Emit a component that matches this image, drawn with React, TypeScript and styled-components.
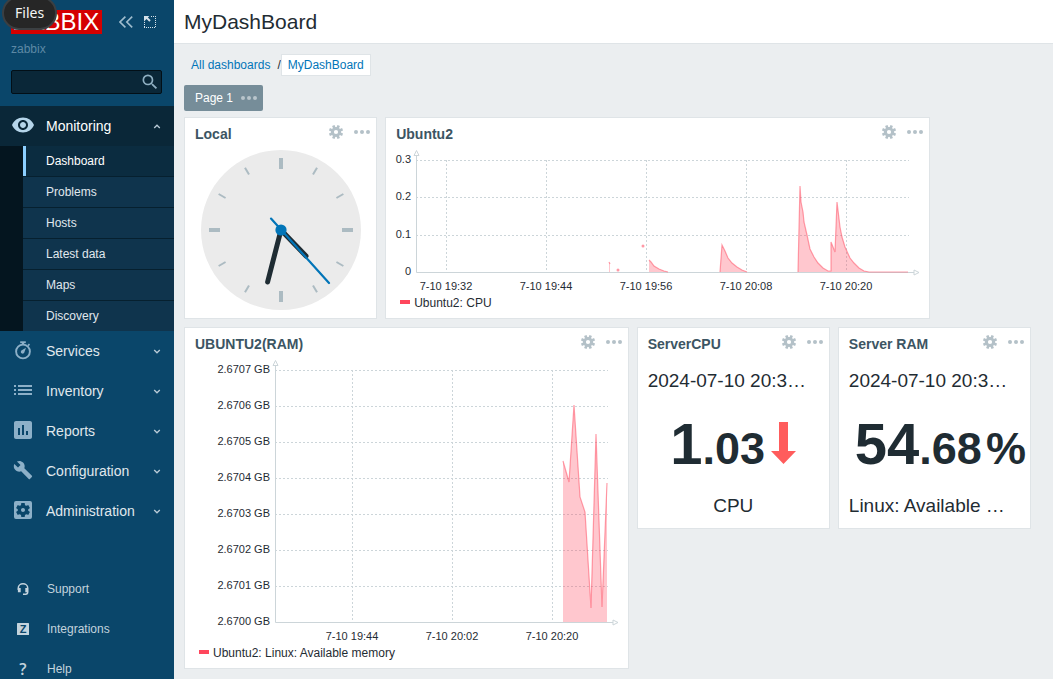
import React, { useLayoutEffect, useRef, useState } from "react";
import styled, { createGlobalStyle } from "styled-components";
import {
  MdAssessment,
  MdBuild,
  MdSearch,
  MdSettingsApplications,
  MdVisibility,
} from "react-icons/md";

const GlobalStyle = createGlobalStyle`
  *, *::before, *::after { box-sizing: border-box; }
  body {
    margin: 0;
    background: #ebeef0;
    color: #1f2c33;
    font-family: "Liberation Sans", Arial, sans-serif;
    font-size: 12px;
    line-height: 16px;
  }
  button { font: inherit; color: inherit; border: 0; padding: 0; background: none; cursor: pointer; }
  a { text-decoration: none; color: inherit; }
  ul { list-style: none; margin: 0; padding: 0; }
  svg { display: block; }
`;

const Page = styled.div`
  display: flex;
  min-height: 100vh;
`;

/* ---------- sidebar ---------- */

const Sidebar = styled.aside`
  position: sticky;
  top: 0;
  flex: 0 0 174px;
  height: 100vh;
  overflow: hidden;
  background: #0a466a;
  color: #e6edf1;
`;

const SidebarTop = styled.div`
  display: flex;
  align-items: center;
  height: 24px;
  margin: 10px 0 0 11px;
`;

const Logo = styled.a`
  display: flex;
  flex: none;
  align-items: center;
  justify-content: center;
  width: 91px;
  height: 24px;
  margin-right: 17px;
  background: #d40000;
  color: #fff;
  font-size: 24px;
  line-height: 24px;
`;

const TopButton = styled.button`
  display: flex;
  margin-right: 11px;
  color: #9fbccd;
`;

const ServerName = styled.div`
  margin: 7px 11px 13px;
  color: #5d89a5;
`;

const SearchForm = styled.form`
  display: flex;
  align-items: center;
  height: 24px;
  margin: 0 12px 12px 11px;
  padding-right: 1px;
  border: 1px solid #020f17;
  border-radius: 2px;
  background: #0a2738;
`;

const SearchInput = styled.input`
  flex: 1;
  min-width: 0;
  height: 22px;
  padding: 0 6px;
  border: 0;
  outline: 0;
  background: transparent;
  color: #f2f2f2;
  font: inherit;
`;

const SearchButton = styled.button`
  display: flex;
  color: #8fafc2;
`;

const MenuLink = styled.a<{ $open?: boolean }>`
  display: flex;
  align-items: center;
  height: 40px;
  padding: 0 13px 0 11px;
  background: ${(p) => (p.$open ? "#0a2738" : "transparent")};
  color: ${(p) => (p.$open ? "#ffffff" : "#e0e8ed")};
  font-size: 14px;
`;

const MenuIcon = styled.span<{ $open?: boolean }>`
  display: flex;
  align-items: center;
  justify-content: center;
  width: 24px;
  height: 24px;
  margin: 0 11px 2px 0;
  color: ${(p) => (p.$open ? "#b5d5ea" : "#8db0c8")};
`;

const MenuLabel = styled.span`
  flex: 1;
`;

const SubMenu = styled.ul`
  padding-left: 23px;
  background: #04151f;
`;

const SubItem = styled.li`
  & + & {
    border-top: 1px solid #06202f;
  }
`;

const SubLink = styled.a<{ $active?: boolean }>`
  display: flex;
  align-items: center;
  height: 30px;
  padding-left: 20px;
  border-left: 3px solid ${(p) => (p.$active ? "#8ccfff" : "#0f344d")};
  background: ${(p) => (p.$active ? "#0b2c40" : "#0f344d")};
  color: ${(p) => (p.$active ? "#ffffff" : "#e0e8ed")};
`;

const FooterMenu = styled.ul`
  margin-top: 38px;
`;

const FooterLink = styled.a`
  display: flex;
  align-items: center;
  height: 40px;
  padding-left: 15px;
  color: #c3d3dd;
`;

const FooterIcon = styled.span`
  display: flex;
  align-items: center;
  justify-content: center;
  width: 16px;
  height: 16px;
  margin-right: 16px;
  padding-bottom: 1px;
  font-family: "Open Sans", sans-serif;
  font-size: 16px;
  font-weight: 600;
`;

const DockTooltip = styled.div`
  position: fixed;
  top: -4px;
  left: 2px;
  z-index: 10;
  padding: 6px 11px 7px;
  border: 2px solid #3b3f42;
  border-radius: 17px;
  background: #262626;
  color: #f5f5f5;
  font-family: "Noto Sans", sans-serif;
  font-size: 14px;
  line-height: 17px;
`;

/* ---------- main area ---------- */

const Main = styled.main`
  flex: 1;
  min-width: 0;
`;

const PageHeader = styled.header`
  height: 44px;
  padding: 10px;
  border-bottom: 1px solid #dfe4e7;
  background: #fff;
`;

const PageTitle = styled.h1`
  margin: 0;
  font-size: 21px;
  line-height: 24px;
  font-weight: 400;
`;

const Breadcrumbs = styled.nav`
  display: flex;
  align-items: center;
  margin: 10px 17px 9px;
`;

const Crumb = styled.a<{ $current?: boolean }>`
  height: 22px;
  padding: ${(p) => (p.$current ? "2px 6px" : "3px 0")};
  border: ${(p) => (p.$current ? "1px solid #dfe4e7" : "0")};
  background: ${(p) => (p.$current ? "#fff" : "transparent")};
  color: #0275b8;
`;

const CrumbDivider = styled.span`
  margin-left: 7px;
`;

const PageTab = styled.button`
  display: flex;
  align-items: center;
  gap: 8px;
  height: 26px;
  margin: 0 10px 6px;
  padding: 0 6px 0 11px;
  border-radius: 2px;
  background: #768d99;
  color: #fff;
`;

const TabDots = styled.span`
  color: #b9c5cc;
`;

const Board = styled.div`
  display: grid;
  grid-template-columns: repeat(17, minmax(0, 1fr));
  gap: 8px;
  align-items: start;
  margin: 0 22px 10px 10px;
`;

const Widget = styled.section<{ $span: number; $tall?: boolean }>`
  grid-column: span ${(p) => p.$span};
  min-height: ${(p) => (p.$tall ? 342 : 202)}px;
  border: 1px solid #dfe4e7;
  background: #fff;
`;

const WidgetHeader = styled.div`
  display: flex;
  align-items: flex-start;
  height: 30px;
  padding: 7px 6px 0 10px;
`;

const WidgetTitle = styled.h2`
  flex: 1;
  margin: 0;
  padding-top: 1px;
  color: #3c5563;
  font-size: 14px;
  line-height: 16px;
  font-weight: 700;
`;

const WidgetButton = styled.button`
  display: flex;
  margin-left: 11px;
  color: #b4c1c8;
`;

const ClockBody = styled.div`
  display: flex;
  justify-content: center;
  padding-top: 2px;
`;

const ChartBody = styled.div`
  overflow: hidden;
`;

const Legend = styled.div`
  display: flex;
  align-items: center;
  gap: 4px;
  padding-left: 14px;
`;

const LegendSwatch = styled.span`
  width: 10px;
  height: 4px;
  margin-bottom: 2px;
  background: #ff465c;
`;

const ValueBody = styled.div`
  display: flex;
  flex-direction: column;
  padding: 11px 10px 0;
`;

const ValueText = styled.div<{ $left?: boolean }>`
  overflow: hidden;
  font-size: 19px;
  line-height: 24px;
  text-align: ${(p) => (p.$left ? "left" : "center")};
  white-space: nowrap;
`;

const ValueRow = styled.div<{ $wide?: boolean }>`
  display: flex;
  align-items: baseline;
  justify-content: ${(p) => (p.$wide ? "flex-start" : "center")};
  height: 64px;
  margin: 19px 0 18px;
  padding-left: ${(p) => (p.$wide ? "6px" : "0")};
  font-weight: 700;
  line-height: 64px;
  white-space: nowrap;
`;

const ValueWhole = styled.span`
  font-size: 58px;
`;

const ValueDecimals = styled.span`
  font-size: 45px;
`;

const ValueUnits = styled.span`
  margin-left: 4px;
  font-size: 45px;
`;

const Trend = styled.span`
  margin-left: 6px;
`;

/* ---------- icons ---------- */

const GearIcon = () => (
  <svg width="14" height="14" viewBox="-7 -7 14 14" aria-hidden="true">
    <circle r="3.6" fill="none" stroke="currentColor" strokeWidth="3" />
    {[0, 1, 2, 3, 4, 5, 6, 7].map((i) => (
      <rect
        key={i}
        x="-1.3"
        y="-7.1"
        width="2.6"
        height="3"
        fill="currentColor"
        transform={`rotate(${22.5 + i * 45})`}
      />
    ))}
  </svg>
);

const DotsIcon = () => (
  <svg width="16" height="14" viewBox="0 0 16 14" fill="currentColor" aria-hidden="true">
    <circle cx="2" cy="7" r="2" />
    <circle cx="8" cy="7" r="2" />
    <circle cx="14" cy="7" r="2" />
  </svg>
);

const CollapseIcon = () => (
  <svg width="14" height="12" viewBox="0 0 14 12" fill="none" stroke="currentColor" strokeWidth="1.6" aria-hidden="true">
    <path d="M6.4.6 1 6l5.4 5.4M13.2.6 7.8 6l5.4 5.4" />
  </svg>
);

const CompactIcon = () => (
  <svg width="12" height="12" viewBox="0 0 12 12" fill="none" stroke="currentColor" aria-hidden="true">
    <path d="M7 .5h5M11.5 2v9M.5 6v5M0 11.5h12" strokeDasharray="1 1" stroke="#d5e2ea" />
    <path d="M0 0h5.4L3.9 1.5l2.8 2.8-1.4 1.4-2.8-2.8L0 5.4z" fill="#d5e2ea" stroke="none" />
  </svg>
);

const TimerIcon = () => (
  <svg width="24" height="24" viewBox="0 0 24 24" fill="none" stroke="currentColor" aria-hidden="true">
    <circle cx="12" cy="13.5" r="6.9" strokeWidth="1.9" />
    <path d="M9.2 4.2h5.6" strokeWidth="1.8" />
    <path d="M12 4v3" strokeWidth="2.4" />
    <path d="M17 7.6l1.5-1.5" strokeWidth="1.6" />
    <path d="M15 9.8l-1.6 4.4a1.8 1.8 0 1 1-2.6-1.9z" fill="currentColor" stroke="none" />
  </svg>
);

const ListIcon = () => (
  <svg width="18" height="10" viewBox="0 0 18 10" fill="currentColor" aria-hidden="true">
    <path d="M0 0h2v2H0zM4 0h14v2H4zM0 4h2v2H0zM4 4h14v2H4zM0 8h2v2H0zM4 8h14v2H4z" />
  </svg>
);

const HeadsetIcon = () => (
  <svg width="12" height="12" viewBox="0 0 12 12" fill="none" stroke="currentColor" aria-hidden="true">
    <path d="M1.3 7V5a4.7 4.2 0 0 1 9.4 0v4q0 2.2-2 2.2H6" strokeWidth="1.5" />
    <path d="M2.3 5v4.2M9.7 5v4.2" strokeWidth="2.8" />
  </svg>
);

const IntegrationsIcon = () => (
  <svg width="12" height="12" viewBox="0 0 12 12" aria-hidden="true">
    <rect width="12" height="12" rx="0.5" fill="currentColor" />
    <text
      x="6"
      y="10"
      textAnchor="middle"
      fontFamily="Liberation Sans, sans-serif"
      fontSize="11"
      fontWeight="700"
      fill="#0a466a"
    >
      Z
    </text>
  </svg>
);

const Chevron = ({ up }: { up?: boolean }) => (
  <svg width="8" height="6" viewBox="0 0 8 6" fill="none" stroke="#b9cbd7" strokeWidth="1.3" aria-hidden="true">
    <path d={up ? "M1.2 5 4 2.2 6.8 5" : "M1.2 2 4 4.8 6.8 2"} />
  </svg>
);

/* ---------- clock ---------- */

const Clock = () => (
  <svg width="160" height="160" viewBox="-80 -80 160 160" role="img" aria-label="Local time">
    <circle r="80" fill="#ebebeb" />
    {Array.from({ length: 12 }, (_, i) => {
      const major = i % 3 === 0;
      return (
        <rect
          key={i}
          x={major ? -2 : -1}
          y={-72}
          width={major ? 4 : 2}
          height={major ? 11 : 8}
          fill="#acbbc2"
          transform={`rotate(${i * 30})`}
        />
      );
    })}
    <g strokeLinecap="round">
      <path d="M0 0 25 26" stroke="#1f2c33" strokeWidth="5" />
      <path d="M0 0-13.4 52" stroke="#1f2c33" strokeWidth="5" />
      <path d="M-10 -11.4 48 53" stroke="#0275b8" strokeWidth="2.2" />
    </g>
    <circle r="5.6" fill="#0275b8" />
  </svg>
);

/* ---------- charts ---------- */

type Point = [number, number];

interface ChartProps {
  name: string;
  axisX: number;
  marginRight: number;
  // horizontal extent that the point and tick positions are given in
  domain: number;
  yTicks: { at: number; label: string }[];
  xTicks: { at: number; label: string }[];
  areas: Point[][];
  dots?: Point[];
}

const PLOT_TOP = 12;

const Chart = ({ name, axisX, marginRight, domain, yTicks, xTicks, areas, dots = [] }: ChartProps) => {
  const ref = useRef<HTMLDivElement>(null);
  const [width, setWidth] = useState(domain + axisX + marginRight);

  useLayoutEffect(() => {
    const box = ref.current;
    if (!box) return;
    const measure = () => setWidth(Math.round(box.clientWidth));
    measure();
    const observer = new ResizeObserver(measure);
    observer.observe(box);
    return () => observer.disconnect();
  }, []);

  const bottom = yTicks[yTicks.length - 1].at;
  const right = width - marginRight;
  const scale = (right - axisX) / domain;
  const px = (x: number) => axisX + x * scale;
  const grid = (x: number) => Math.round(px(x)) + 0.5;

  return (
    <ChartBody ref={ref}>
      <svg width={width} height={bottom + 23} role="img" aria-label={name}>
        <g stroke="#ccd5d9" strokeDasharray="2 2" fill="none">
          {yTicks.slice(0, -1).map((t) => (
            <path key={t.label} d={`M${axisX} ${t.at + 0.5}H${right}`} />
          ))}
          {xTicks.map((t) => (
            <path key={t.label} d={`M${grid(t.at)} ${PLOT_TOP}V${bottom}`} />
          ))}
        </g>
        <path
          d={`M${axisX + 0.5} 7V${bottom + 0.5}H${right + 5}`}
          fill="none"
          stroke="#ccd5d9"
        />
        <path
          d={`M${axisX - 2} 7.5h5l-2.5-5zM${right + 5} ${bottom - 2}v5l5-2.5z`}
          fill="#fff"
          stroke="#ccd5d9"
        />
        {areas.map((points, i) => {
          const line = points.map(([x, y]) => `${px(x)} ${y}`).join("L");
          const first = px(points[0][0]);
          const last = px(points[points.length - 1][0]);
          return (
            <g key={i}>
              <path d={`M${first} ${bottom}L${line}L${last} ${bottom}z`} fill="#ff465c" fillOpacity="0.3" />
              <path d={`M${line}`} fill="none" stroke="#ff465c" strokeOpacity="0.5" strokeWidth="1.2" />
            </g>
          );
        })}
        {dots.map(([x, y]) => (
          <circle key={x} cx={px(x)} cy={y} r="1.5" fill="#ff465c" fillOpacity="0.55" />
        ))}
        <g fontSize="11" fill="#1f2c33">
          {yTicks.map((t) => (
            <text key={t.label} x={axisX - 5} y={t.at + 3} textAnchor="end">
              {t.label}
            </text>
          ))}
          {xTicks.map((t) => (
            <text key={t.label} x={Math.round(px(t.at))} y={bottom + 18} textAnchor="middle">
              {t.label}
            </text>
          ))}
        </g>
      </svg>
      <Legend>
        <LegendSwatch />
        {name}
      </Legend>
    </ChartBody>
  );
};

const cpuChart: ChartProps = {
  name: "Ubuntu2: CPU",
  axisX: 30,
  marginRight: 20,
  domain: 493,
  yTicks: [
    { at: 12, label: "0.3" },
    { at: 49, label: "0.2" },
    { at: 87, label: "0.1" },
    { at: 124, label: "0" },
  ],
  xTicks: [
    { at: 30, label: "7-10 19:32" },
    { at: 130, label: "7-10 19:44" },
    { at: 230, label: "7-10 19:56" },
    { at: 330, label: "7-10 20:08" },
    { at: 430, label: "7-10 20:20" },
  ],
  areas: [
    [[193, 114], [194, 116]],
    [[233, 112], [235, 114], [238, 118], [243, 121], [248, 123], [252, 124]],
    [
      [304, 124], [306, 97], [309, 103], [312, 110], [316, 115], [321, 119], [326, 122], [331, 124],
    ],
    [
      [382, 124], [384, 38], [385, 54], [387, 64], [388, 74], [391, 87], [394, 101], [398, 109],
      [402, 115], [407, 120], [412, 123], [415, 123], [415, 94], [419, 104], [421, 54], [424, 79],
      [426, 89], [429, 99], [434, 110], [438, 115], [443, 120], [448, 123], [453, 124], [492, 124],
    ],
  ],
  dots: [[202, 122], [227, 98]],
};

const ramChart: ChartProps = {
  name: "Ubuntu2: Linux: Available memory",
  axisX: 90,
  marginRight: 20,
  domain: 333,
  yTicks: ["7", "6", "5", "4", "3", "2", "1", "0"].map((digit, i) => ({
    at: 12 + i * 36,
    label: `2.670${digit} GB`,
  })),
  xTicks: [
    { at: 77, label: "7-10 19:44" },
    { at: 177, label: "7-10 20:02" },
    { at: 277, label: "7-10 20:20" },
  ],
  areas: [
    [
      [288, 103], [294, 124], [299, 47], [305, 139], [310, 154], [316, 250], [321, 76], [327, 249], [332, 125],
    ],
  ],
};

/* ---------- composition ---------- */

const WidgetFrame = ({
  title,
  span,
  tall,
  children,
}: {
  title: string;
  span: number;
  tall?: boolean;
  children: React.ReactNode;
}) => (
  <Widget $span={span} $tall={tall}>
    <WidgetHeader>
      <WidgetTitle>{title}</WidgetTitle>
      <WidgetButton aria-label="Edit">
        <GearIcon />
      </WidgetButton>
      <WidgetButton aria-label="Actions">
        <DotsIcon />
      </WidgetButton>
    </WidgetHeader>
    {children}
  </Widget>
);

const subItems = ["Dashboard", "Problems", "Hosts", "Latest data", "Maps", "Discovery"];

const sections = [
  { label: "Services", icon: <TimerIcon /> },
  { label: "Inventory", icon: <ListIcon /> },
  { label: "Reports", icon: <MdAssessment size={24} /> },
  { label: "Configuration", icon: <MdBuild size={20} /> },
  { label: "Administration", icon: <MdSettingsApplications size={24} /> },
];

const footerItems = [
  { label: "Support", icon: <HeadsetIcon /> },
  { label: "Integrations", icon: <IntegrationsIcon /> },
  { label: "Help", icon: "?" },
];

export default function App() {
  return (
    <>
      <GlobalStyle />
      <Page>
        <Sidebar>
          <SidebarTop>
            <Logo href="#">ZABBIX</Logo>
            <TopButton aria-label="Collapse sidebar">
              <CollapseIcon />
            </TopButton>
            <TopButton aria-label="Hide sidebar">
              <CompactIcon />
            </TopButton>
          </SidebarTop>
          <ServerName>zabbix</ServerName>
          <SearchForm role="search">
            <SearchInput type="text" aria-label="Search" />
            <SearchButton type="button" aria-label="Search">
              <MdSearch size={20} />
            </SearchButton>
          </SearchForm>
          <nav>
            <MenuLink href="#" $open>
              <MenuIcon $open>
                <MdVisibility size={24} />
              </MenuIcon>
              <MenuLabel>Monitoring</MenuLabel>
              <Chevron up />
            </MenuLink>
            <SubMenu>
              {subItems.map((label, i) => (
                <SubItem key={label}>
                  <SubLink href="#" $active={i === 0}>
                    {label}
                  </SubLink>
                </SubItem>
              ))}
            </SubMenu>
            {sections.map((s) => (
              <MenuLink href="#" key={s.label}>
                <MenuIcon>{s.icon}</MenuIcon>
                <MenuLabel>{s.label}</MenuLabel>
                <Chevron />
              </MenuLink>
            ))}
          </nav>
          <FooterMenu>
            {footerItems.map((f) => (
              <li key={f.label}>
                <FooterLink href="#">
                  <FooterIcon>{f.icon}</FooterIcon>
                  {f.label}
                </FooterLink>
              </li>
            ))}
          </FooterMenu>
        </Sidebar>

        <Main>
          <PageHeader>
            <PageTitle>MyDashBoard</PageTitle>
          </PageHeader>
          <Breadcrumbs>
            <Crumb href="#">All dashboards</Crumb>
            <CrumbDivider>/</CrumbDivider>
            <Crumb href="#" $current>
              MyDashBoard
            </Crumb>
          </Breadcrumbs>
          <PageTab>
            Page 1
            <TabDots>
              <DotsIcon />
            </TabDots>
          </PageTab>
          <Board>
            <WidgetFrame title="Local" span={4}>
              <ClockBody>
                <Clock />
              </ClockBody>
            </WidgetFrame>
            <WidgetFrame title="Ubuntu2" span={11}>
              <Chart {...cpuChart} />
            </WidgetFrame>
            <WidgetFrame title="UBUNTU2(RAM)" span={9} tall>
              <Chart {...ramChart} />
            </WidgetFrame>
            <WidgetFrame title="ServerCPU" span={4}>
              <ValueBody>
                <ValueText $left>2024-07-10 20:3…</ValueText>
                <ValueRow>
                  <ValueWhole>1</ValueWhole>
                  <ValueDecimals>.03</ValueDecimals>
                  <Trend>
                    <svg width="25" height="42" viewBox="0 0 25 42" role="img" aria-label="Falling">
                      <path d="M8 0h9v29h8L12.5 42 0 29h8z" fill="#ff5c5c" />
                    </svg>
                  </Trend>
                </ValueRow>
                <ValueText>CPU</ValueText>
              </ValueBody>
            </WidgetFrame>
            <WidgetFrame title="Server RAM" span={4}>
              <ValueBody>
                <ValueText $left>2024-07-10 20:3…</ValueText>
                <ValueRow $wide>
                  <ValueWhole>54</ValueWhole>
                  <ValueDecimals>.68</ValueDecimals>
                  <ValueUnits>%</ValueUnits>
                </ValueRow>
                <ValueText $left>Linux: Available …</ValueText>
              </ValueBody>
            </WidgetFrame>
          </Board>
        </Main>
      </Page>
      <DockTooltip role="tooltip">Files</DockTooltip>
    </>
  );
}
